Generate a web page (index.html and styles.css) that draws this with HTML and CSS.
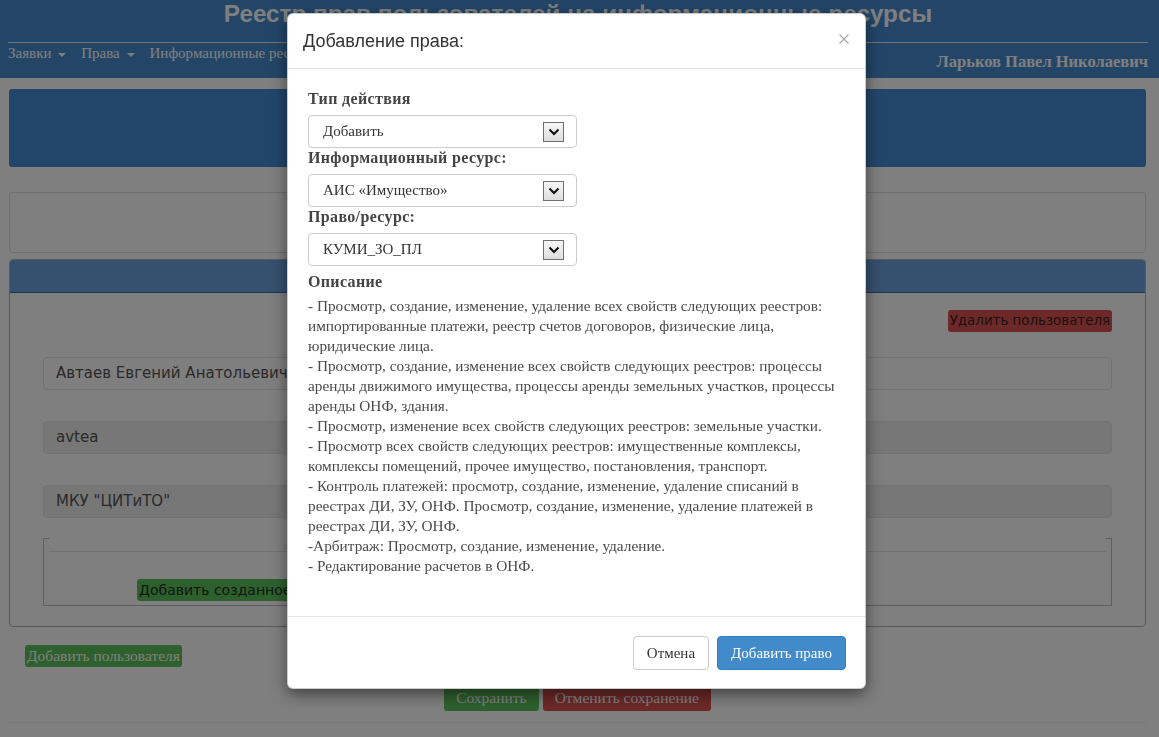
FILE: index.html
```html
<!DOCTYPE html>
<html lang="ru">
<head>
<meta charset="utf-8">
<title>Реестр прав пользователей на информационные ресурсы</title>
<link rel="stylesheet" href="styles.css">
</head>
<body>
<header class="topbar">
  <h1 class="site-title">Реестр прав пользователей на информационные ресурсы</h1>
  <div class="topbar-rule"></div>
  <div class="topbar-nav">
    <ul class="menu">
      <li>Заявки <span class="caret"></span></li>
      <li>Права <span class="caret"></span></li>
      <li>Информационные ресурсы</li>
    </ul>
    <div class="user-name">Ларьков Павел Николаевич</div>
  </div>
</header>

<main class="page">
  <div class="banner"></div>
  <div class="filter-box"></div>
  <section class="panel">
    <div class="panel-heading"></div>
    <div class="panel-body">
      <div class="panel-actions"><button class="btn-flat btn-red">Удалить пользователя</button></div>
      <div class="field">Автаев Евгений Анатольевич</div>
      <div class="field field-disabled">avtea</div>
      <div class="field field-disabled">МКУ "ЦИТиТО"</div>
      <fieldset class="rights">
        <legend></legend>
        <button class="btn-flat btn-green add-created">Добавить созданное право</button>
      </fieldset>
    </div>
  </section>
  <button class="btn-serif btn-green add-user">Добавить пользователя</button>
  <div class="save-row">
    <button class="btn-serif btn-green">Сохранить</button>
    <button class="btn-serif btn-red">Отменить сохранение</button>
  </div>
  <div class="page-rule"></div>
</main>

<div class="backdrop"></div>

<div class="modal">
  <div class="modal-header">
    <h4 class="modal-title">Добавление права:</h4>
    <span class="modal-close">
      <svg width="10" height="10" viewBox="0 0 10 10"><path d="M0.5 0.5L9.5 9.5M9.5 0.5L0.5 9.5" stroke="#a8a8a8" stroke-width="1.2" fill="none"/></svg>
    </span>
  </div>
  <div class="modal-body">
    <label class="form-label">Тип действия</label>
    <div class="select"><span>Добавить</span><span class="select-arrow"><svg width="12" height="8" viewBox="0 0 12 8"><path d="M1.5 1.5L6 6L10.5 1.5" stroke="#111" stroke-width="2" fill="none"/></svg></span></div>
    <label class="form-label">Информационный ресурс:</label>
    <div class="select"><span>АИС «Имущество»</span><span class="select-arrow"><svg width="12" height="8" viewBox="0 0 12 8"><path d="M1.5 1.5L6 6L10.5 1.5" stroke="#111" stroke-width="2" fill="none"/></svg></span></div>
    <label class="form-label">Право/ресурс:</label>
    <div class="select"><span>КУМИ_ЗО_ПЛ</span><span class="select-arrow"><svg width="12" height="8" viewBox="0 0 12 8"><path d="M1.5 1.5L6 6L10.5 1.5" stroke="#111" stroke-width="2" fill="none"/></svg></span></div>
    <label class="form-label label-desc">Описание</label>
    <div class="desc">
      <p>- Просмотр, создание, изменение, удаление всех свойств следующих реестров:<br>импортированные платежи, реестр счетов договоров, физические лица,<br>юридические лица.</p>
      <p>- Просмотр, создание, изменение всех свойств следующих реестров: процессы<br>аренды движимого имущества, процессы аренды земельных участков, процессы<br>аренды ОНФ, здания.</p>
      <p>- Просмотр, изменение всех свойств следующих реестров: земельные участки.</p>
      <p>- Просмотр всех свойств следующих реестров: имущественные комплексы,<br>комплексы помещений, прочее имущество, постановления, транспорт.</p>
      <p>- Контроль платежей: просмотр, создание, изменение, удаление списаний в<br>реестрах ДИ, ЗУ, ОНФ. Просмотр, создание, изменение, удаление платежей в<br>реестрах ДИ, ЗУ, ОНФ.</p>
      <p>-Арбитраж: Просмотр, создание, изменение, удаление.</p>
      <p>- Редактирование расчетов в ОНФ.</p>
    </div>
  </div>
  <div class="modal-footer">
    <button class="btn btn-default">Отмена</button>
    <button class="btn btn-primary">Добавить право</button>
  </div>
</div>
</body>
</html>
```

FILE: styles.css
```css
* { box-sizing: border-box; }
html, body { margin: 0; }
body {
  position: relative;
  width: 1159px;
  height: 737px;
  overflow: hidden;
  background: #fff;
  color: #333;
  font-family: "Liberation Serif", "Times New Roman", serif;
}

/* top bar */
.topbar {
  height: 78px;
  padding: 0 11px 0 8px;
  background: #468cd0;
  color: #fff;
}
.site-title {
  margin: 0;
  font: bold 24.3px/28px "Liberation Sans", Arial, sans-serif;
  text-align: center;
  color: #fff;
}
.topbar-rule {
  margin-top: 14px;
  border-top: 1px solid #e8e8e8;
}
.topbar-nav {
  display: flex;
  justify-content: space-between;
}
.menu {
  display: flex;
  margin: 1px 0 0;
  padding: 0;
  list-style: none;
  font-size: 15px;
  line-height: 18px;
  color: #fff;
}
.menu li { margin-right: 15px; white-space: nowrap; }
.caret {
  display: inline-block;
  width: 0;
  height: 0;
  margin-left: 3px;
  vertical-align: middle;
  border-top: 4px solid #fff;
  border-left: 4px solid transparent;
  border-right: 4px solid transparent;
}
.user-name {
  margin-top: 10px;
  font-weight: bold;
  font-size: 16.5px;
  line-height: 18px;
  white-space: nowrap;
}

/* page */
.page { padding: 11px 13px 0 9px; }
.banner {
  height: 78px;
  background: #448cd4;
  border-radius: 3px;
}
.filter-box {
  height: 61px;
  margin-top: 25px;
  border: 1px solid #dcdcdc;
  border-radius: 4px;
}
.panel {
  margin-top: 6px;
  border: 1px solid #b4b4b4;
  border-radius: 4px;
  overflow: hidden;
}
.panel-heading {
  height: 33px;
  background: #6ca0de;
  border-bottom: 1px solid #3a6aa2;
}
.panel-body { padding: 17px 33px 20px; }
.panel-actions { display: flex; justify-content: flex-end; }

.btn-flat {
  height: 22px;
  padding: 0 2px;
  border: 0;
  border-radius: 3px;
  font: 13.4px/22px "DejaVu Sans", Verdana, sans-serif;
  color: #3a2020;
}
.btn-red { background: #d9534f; }
.btn-green { background: #5cc05c; }

.field {
  height: 33px;
  margin-top: 25px;
  padding: 0 12px;
  border: 1px solid #e4e4e4;
  border-radius: 4px;
  font: 15px/31px "DejaVu Sans", Verdana, sans-serif;
  color: #555;
}
.field + .field { margin-top: 31px; }
.field-disabled { background: #eee; }

.rights {
  margin: 6px 0 0;
  padding: 0 5px 4px;
  border: 1px solid #bdbdbd;
  border-radius: 0;
}
.rights legend {
  display: block;
  width: 100%;
  height: 28px;
  padding: 0;
  margin: 0 0 27px;
  border-bottom: 1px solid #e5e5e5;
}
.add-created {
  display: block;
  margin-left: 88px;
  font-size: 14px;
  color: #1c301c;
}

.btn-serif {
  border: 0;
  border-radius: 3px;
  font-family: "Liberation Serif", "Times New Roman", serif;
  font-size: 15.5px;
  color: #fff;
}
.add-user {
  display: block;
  height: 22px;
  margin: 18px 0 0 16px;
  padding: 0 2px;
}
.save-row {
  display: flex;
  justify-content: center;
  gap: 4px;
  margin-top: 18px;
}
.save-row .btn-serif {
  height: 26px;
  padding: 0 12px;
}
.page-rule {
  margin-top: 11px;
  border-top: 1px solid #eee;
}

/* modal */
.backdrop {
  position: fixed;
  inset: 0;
  background: rgba(0, 0, 0, 0.5);
}
.modal {
  position: absolute;
  top: 13px;
  left: 287px;
  width: 579px;
  background: #fff;
  border: 1px solid rgba(0, 0, 0, 0.2);
  border-radius: 6px;
  box-shadow: 0 5px 15px rgba(0, 0, 0, 0.5);
}
.modal-header {
  display: flex;
  justify-content: space-between;
  align-items: center;
  padding: 15px 16px 15px 15px;
  border-bottom: 1px solid #e5e5e5;
}
.modal-title {
  margin: 0;
  font: normal 18px/24px "Liberation Sans", Arial, sans-serif;
  color: #333;
}
.modal-close { display: flex; margin-top: -4px; }

.modal-body { padding: 20px 20px 40px; }
.form-label {
  display: block;
  margin-bottom: 6px;
  font-weight: bold;
  font-size: 16px;
  letter-spacing: 0.35px;
  line-height: 20px;
  color: #444;
}
.label-desc { margin-top: 6px; margin-bottom: 4px; }
.select {
  display: flex;
  align-items: center;
  justify-content: space-between;
  width: 269px;
  height: 33px;
  padding: 0 12px 0 14px;
  border: 1px solid #ccc;
  border-radius: 4px;
  font-size: 15px;
  color: #333;
}
.select-arrow {
  display: flex;
  align-items: center;
  justify-content: center;
  width: 21px;
  height: 20px;
  border: 1px solid #6f6f6f;
  background: linear-gradient(#f7f7f7, #dedede);
}
.desc {
  font-size: 15.3px;
  line-height: 20px;
  color: #4a4a4a;
}
.desc p { margin: 0; white-space: nowrap; }

.modal-footer {
  display: flex;
  justify-content: flex-end;
  gap: 8px;
  padding: 19px 19px 18px 20px;
  border-top: 1px solid #e5e5e5;
}
.btn {
  height: 34px;
  padding: 0 13px;
  border-radius: 4px;
  font-family: "Liberation Serif", "Times New Roman", serif;
  font-size: 15px;
}
.btn-default { background: #fff; border: 1px solid #ccc; color: #333; }
.btn-primary { background: #428bca; border: 1px solid #357ebd; color: #fff; }
```
